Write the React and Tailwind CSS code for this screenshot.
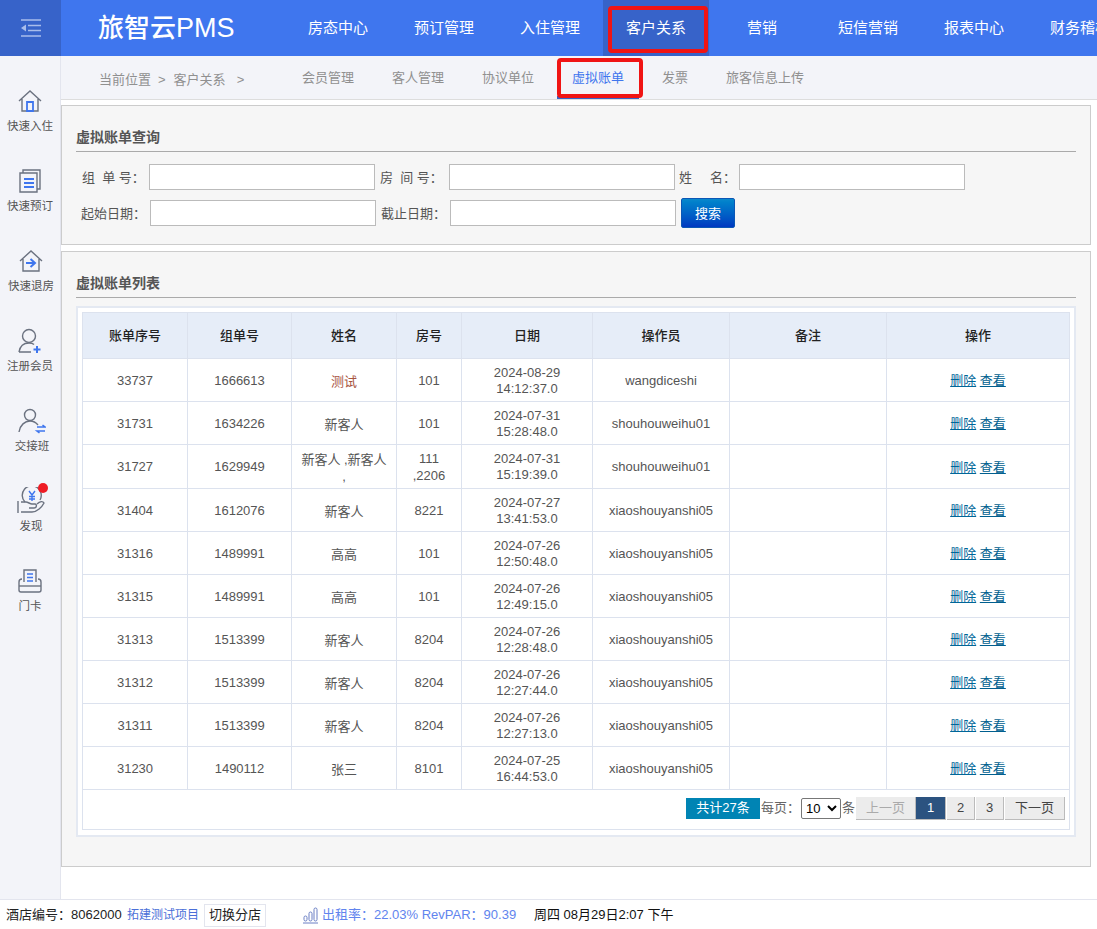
import React from "react";

const navItems = ["房态中心", "预订管理", "入住管理", "客户关系", "营销", "短信营销", "报表中心", "财务稽核"];
const subItems = ["会员管理", "客人管理", "协议单位", "虚拟账单", "发票", "旅客信息上传"];

const rows = [
  ["33737", "1666613", "测试", "101", "2024-08-29", "14:12:37.0", "wangdiceshi"],
  ["31731", "1634226", "新客人", "101", "2024-07-31", "15:28:48.0", "shouhouweihu01"],
  ["31727", "1629949", "新客人 ,新客人 ,", "111 ,2206", "2024-07-31", "15:19:39.0", "shouhouweihu01"],
  ["31404", "1612076", "新客人", "8221", "2024-07-27", "13:41:53.0", "xiaoshouyanshi05"],
  ["31316", "1489991", "高高", "101", "2024-07-26", "12:50:48.0", "xiaoshouyanshi05"],
  ["31315", "1489991", "高高", "101", "2024-07-26", "12:49:15.0", "xiaoshouyanshi05"],
  ["31313", "1513399", "新客人", "8204", "2024-07-26", "12:28:48.0", "xiaoshouyanshi05"],
  ["31312", "1513399", "新客人", "8204", "2024-07-26", "12:27:44.0", "xiaoshouyanshi05"],
  ["31311", "1513399", "新客人", "8204", "2024-07-26", "12:27:13.0", "xiaoshouyanshi05"],
  ["31230", "1490112", "张三", "8101", "2024-07-25", "16:44:53.0", "xiaoshouyanshi05"],
];

const HomeIcon = () => (
  <svg width="26" height="26" viewBox="0 0 26 26" fill="none" stroke="#6b7280" strokeWidth="1.4">
    <path d="M2 13 L13 3 L24 13 M5 11 V23 H21 V11" />
    <path d="M10 14 H16 V23 H10 Z" stroke="#3f76ee" strokeWidth="1.8" />
  </svg>
);

const BookIcon = () => (
  <svg width="26" height="26" viewBox="0 0 26 26" fill="none" stroke="#6b7280" strokeWidth="1.4">
    <path d="M3 5 H20 V24 H3 Z" />
    <path d="M6 5 V2 H23 V21 H20" />
    <path d="M7 11 H17 M7 15 H17 M7 19 H17" stroke="#3f76ee" strokeWidth="1.8" />
  </svg>
);

const OutIcon = () => (
  <svg width="26" height="26" viewBox="0 0 26 26" fill="none" stroke="#6b7280" strokeWidth="1.4">
    <path d="M2 13 L13 3 L24 13 M5 11 V23 H21 V11" />
    <path d="M8 15 H16 M12.5 11 L17 15 L12.5 19" stroke="#3f76ee" strokeWidth="2" />
  </svg>
);

const UserPlusIcon = () => (
  <svg width="26" height="26" viewBox="0 0 26 26" fill="none" stroke="#6b7280" strokeWidth="1.4">
    <circle cx="12" cy="8" r="6.5" />
    <path d="M2 24 C3 18 7 15 12 15 C14 15 16 15.5 17 16.5 M2 24 H14" />
    <path d="M20 18 V25 M16.5 21.5 H23.5" stroke="#3f76ee" strokeWidth="2" />
  </svg>
);

const UserSwapIcon = () => (
  <svg width="28" height="26" viewBox="0 0 28 26" fill="none" stroke="#6b7280" strokeWidth="1.4">
    <circle cx="12" cy="7" r="5.5" />
    <path d="M1 24 C2 17 7 13 12 13 C15 13 18 14.5 20 17" />
    <path d="M19 19 H27 L24.5 17 M27 23 H19 L21.5 25" stroke="#3f76ee" strokeWidth="1.6" />
  </svg>
);

const CoinHandIcon = () => (
  <div className="relative h-[28px] w-[28px]">
    <svg width="28" height="28" viewBox="0 0 28 28" fill="none" stroke="#6b7280" strokeWidth="1.4">
      <path d="M8 15 A9.5 9.5 0 1 1 23 13" />
      <path d="M1 14 V26 M4 15 H9 C11 15 13 17 15 17 H18 C20 17 20 21 17 21 H12 M4 25 H15 C20 25 25 20 27 16 C26 14 23 14 20 17" />
      <path d="M12 4 L15 8 L18 4 M15 8 V14 M12 9.5 H18 M12 12 H18" stroke="#3f76ee" strokeWidth="1.4" />
    </svg>
    <span className="absolute right-[-3px] top-[-4px] h-[10px] w-[10px] rounded-full bg-[#ee1c25]" />
  </div>
);

const CardIcon = () => (
  <svg width="26" height="26" viewBox="0 0 26 26" fill="none" stroke="#6b7280" strokeWidth="1.4">
    <path d="M7 14 V2 H19 V14" />
    <path d="M5 11 C3 11 2 12 2 14 V22 C2 23.5 3 24 4 24 H22 C23 24 24 23.5 24 22 V14 C24 12 23 11 21 11" />
    <path d="M2 18 H24" />
    <path d="M10 6 H16 M10 9.5 H16 M10 13 H16" stroke="#3f76ee" strokeWidth="1.6" />
  </svg>
);

const sideItems = [
  { label: "快速入住", icon: <HomeIcon />, cls: "" },
  { label: "快速预订", icon: <BookIcon />, cls: "" },
  { label: "快速退房", icon: <OutIcon />, cls: "pl-[2px]" },
  { label: "注册会员", icon: <UserPlusIcon />, cls: "" },
  { label: "交接班", icon: <UserSwapIcon />, cls: "pl-[4px]" },
  { label: "发现", icon: <CoinHandIcon />, cls: "pl-[2px]" },
  { label: "门卡", icon: <CardIcon />, cls: "" },
];

const PanelTitle = ({ children }) => (
  <div className="flex h-[26px] items-center border-b border-[#aaaaaa] pb-[2px] text-[14px] font-bold text-[#555555]">{children}</div>
);

const Field = ({ label, labelCls }) => (
  <>
    <span className={`whitespace-pre pt-[1px] text-[13px] text-[#555555] ${labelCls}`}>{label}</span>
    <input className="h-[26px] w-[226px] border border-[#bbbbbb] bg-white" />
  </>
);

const Page = ({ children, cls }) => (
  <span className={`flex h-[23px] items-center justify-center border-r border-b border-[#bbbbbb] text-[13px] ${cls}`}>
    {children}
  </span>
);

const App = () => {
  return (
    <div className="flex h-[929px] w-[1097px] flex-col overflow-hidden bg-white font-['Liberation_Sans','Noto_Sans_CJK_SC',sans-serif]">
      <header className="flex h-[56px] shrink-0 bg-[#3f76ee] text-white">
        <div className="flex w-[61px] shrink-0 items-center justify-center bg-[#3763c9]">
          <svg width="22" height="18" viewBox="0 0 22 18" fill="none" stroke="#a9bdeb" strokeWidth="1.3">
            <path d="M1 1 H21 M8 6.5 H21 M8 11.5 H21 M1 17 H21" />
            <path d="M1 9 L6 5.5 V12.5 Z" fill="#a9bdeb" stroke="none" />
          </svg>
        </div>
        <div className="ml-[37px] w-[187px] shrink-0 text-[26px] font-medium leading-[57px]">
          旅智云<span className="text-[27px]">PMS</span>
        </div>
        <nav className="flex">
          {navItems.map((item) => (
            <div
              key={item}
              className={`relative flex w-[106px] shrink-0 items-center justify-center whitespace-nowrap text-[15px] ${
                item === "客户关系" ? "bg-[#3763c9]" : ""
              }`}
            >
              {item}
              {item === "客户关系" && (
                <span className="absolute left-[5px] top-[6px] h-[47px] w-[100px] rounded-[4px] border-[4px] border-[#f01414]" />
              )}
            </div>
          ))}
        </nav>
      </header>

      <div className="flex min-h-0 flex-1">
        <aside className="w-[61px] shrink-0 border-r border-[#e3e5ee] bg-[#f3f4f9]">
          {sideItems.map((s) => (
            <div key={s.label} className={`flex h-[80px] flex-col items-center pt-[32px] ${s.cls}`}>
              <div className="flex h-[26px] items-center justify-center">{s.icon}</div>
              <div className="mt-[4px] whitespace-nowrap text-[11.5px] leading-[16px] text-[#555555]">{s.label}</div>
            </div>
          ))}
        </aside>

        <main className="flex min-w-0 flex-1 flex-col">
          <div className="flex h-[44px] shrink-0 border-b border-[#dddddd] bg-[#f3f4f9] text-[13px] text-[#909090]">
            <div className="flex w-[226px] shrink-0 items-center pl-[38px] pt-[4px]">
              <span>当前位置</span>
              <span className="ml-[7px]">&gt;</span>
              <span className="ml-[8px]">客户关系</span>
              <span className="ml-[11px]">&gt;</span>
            </div>
            <div className="flex gap-[8px]">
              {subItems.map((item) => (
                <div
                  key={item}
                  className={`relative flex items-center px-[15px] ${
                    item === "虚拟账单" ? "border-b-[3px] border-[#3763c9] pt-[4px] text-[#3f76ee]" : "pt-[1px]"
                  }`}
                >
                  {item}
                  {item === "虚拟账单" && (
                    <span className="absolute left-0 top-[2px] h-[40px] w-[86px] rounded-[4px] border-[4px] border-[#f01414]" />
                  )}
                </div>
              ))}
            </div>
          </div>

          <section className="mr-[6px] mt-[5px] h-[140px] shrink-0 border border-[#cccccc] bg-[#f6f6f6] px-[14px] pt-[20px]">
            <PanelTitle>虚拟账单查询</PanelTitle>
            <div className="mt-[12px] flex h-[26px] items-center">
              <Field label={"组  单 号："} labelCls="w-[73px] pl-[6px]" />
              <Field label={"房  间 号："} labelCls="ml-[5px] w-[69px]" />
              <Field label={"姓     名："} labelCls="ml-[4px] w-[60px]" />
            </div>
            <div className="mt-[8px] flex h-[30px] items-center">
              <Field label="起始日期：" labelCls="w-[74px] pl-[5px]" />
              <Field label="截止日期：" labelCls="ml-[5px] w-[69px]" />
              <button className="ml-[5px] h-[30px] w-[54px] rounded-[2px] border border-[#0b57b5] bg-gradient-to-b from-[#0a88cc] to-[#0038c0] pt-[1px] text-[13px] text-white">
                搜索
              </button>
            </div>
          </section>

          <section className="mr-[6px] mt-[6px] h-[616px] shrink-0 border border-[#cccccc] bg-[#f6f6f6] px-[14px] pt-[20px]">
            <PanelTitle>虚拟账单列表</PanelTitle>
            <div className="mt-[8px] h-[531px] border-2 border-[#e4e9f2] bg-white p-[4px]">
              <table className="w-[987px] table-fixed border-collapse text-center text-[13px] text-[#555555]">
                <colgroup>
                  <col className="w-[105px]" />
                  <col className="w-[104px]" />
                  <col className="w-[105px]" />
                  <col className="w-[65px]" />
                  <col className="w-[131px]" />
                  <col className="w-[137px]" />
                  <col className="w-[157px]" />
                  <col className="w-[183px]" />
                </colgroup>
                <thead>
                  <tr className="h-[46px] bg-[#e6edf8] font-medium text-[#222222]">
                    {["账单序号", "组单号", "姓名", "房号", "日期", "操作员", "备注", "操作"].map((h) => (
                      <th key={h} className="border border-[#dce2ee] font-medium">
                        {h}
                      </th>
                    ))}
                  </tr>
                </thead>
                <tbody>
                  {rows.map((r) => (
                    <tr key={r[0]} className={r[0] === "31727" ? "h-[44px]" : "h-[43px]"}>
                      <td className="border border-[#dce2ee] pt-[1px]">{r[0]}</td>
                      <td className="border border-[#dce2ee] pt-[1px]">{r[1]}</td>
                      <td className={`border border-[#dce2ee] px-[8px] pt-[2px] leading-[17px] ${r[2] === "测试" ? "text-[#a8543f]" : ""}`}>{r[2]}</td>
                      <td className="border border-[#dce2ee] px-[8px] pt-[1px] leading-[17px]">{r[3]}</td>
                      <td className="border border-[#dce2ee] pt-[1px] leading-[16px]">
                        {r[4]}
                        <br />
                        {r[5]}
                      </td>
                      <td className="border border-[#dce2ee] pt-[1px]">{r[6]}</td>
                      <td className="border border-[#dce2ee]"></td>
                      <td className="border border-[#dce2ee] pt-[2px]">
                        <a className="text-[#006699] underline">删除</a> <a className="text-[#005f8f] underline">查看</a>
                      </td>
                    </tr>
                  ))}
                  <tr className="h-[40px]">
                    <td colSpan={8} className="border border-[#dce2ee] p-0">
                      <div className="flex items-center pb-[3px] pl-[603px]">
                        <span className="flex h-[21px] w-[74px] items-center justify-center bg-[#0084b4] text-[13px] text-white">共计27条</span>
                        <span className="ml-[1px] w-[40px] whitespace-nowrap text-left text-[13px] text-[#666666]">每页：</span>
                        <select className="h-[21px] w-[40px] rounded-[2px] border border-[#777777] bg-white text-[13px] text-black">
                          <option>10</option>
                        </select>
                        <span className="ml-[1px] w-[14px] text-left text-[13px] text-[#666666]">条</span>
                        <Page cls="w-[60px] bg-[#ececec] text-[#aaaaaa]">上一页</Page>
                        <Page cls="w-[30px] bg-[#2c5380] text-white">1</Page>
                        <Page cls="ml-[1px] w-[28px] bg-[#ececec] text-[#444444]">2</Page>
                        <Page cls="ml-[1px] w-[28px] bg-[#ececec] text-[#444444]">3</Page>
                        <Page cls="ml-[1px] w-[60px] bg-[#ececec] text-[#444444]">下一页</Page>
                      </div>
                    </td>
                  </tr>
                </tbody>
              </table>
            </div>
          </section>
        </main>
      </div>

      <footer className="flex h-[30px] shrink-0 items-center border-t border-[#e3e5ee] bg-white pl-[6px] pt-[1px] text-[13px] text-[#222222]">
        <span className="w-[115px] whitespace-nowrap">酒店编号：8062000</span>
        <span className="ml-[6px] w-[73px] whitespace-nowrap text-[12px] text-[#4a6fd8]">拓建测试项目</span>
        <span className="ml-[4px] flex h-[23px] w-[62px] items-center justify-center border border-[#e3e5ee] text-[13px]">切换分店</span>
        <svg className="ml-[37px]" width="15" height="17" viewBox="0 0 15 17" fill="none" stroke="#6b7fc4" strokeWidth="1">
          <path d="M0 16 H15" />
          <rect x="1" y="9" width="3" height="5" rx="1.5" />
          <rect x="6" y="5" width="3" height="9" rx="1.5" />
          <rect x="11" y="1" width="3" height="13" rx="1.5" />
        </svg>
        <span className="ml-[4px] w-[212px] whitespace-pre text-[#6184ee]">出租率：22.03% RevPAR：90.39</span>
        <span className="text-[13px] text-[#111111]">周四 08月29日2:07 下午</span>
      </footer>
    </div>
  );
};

export default App;
